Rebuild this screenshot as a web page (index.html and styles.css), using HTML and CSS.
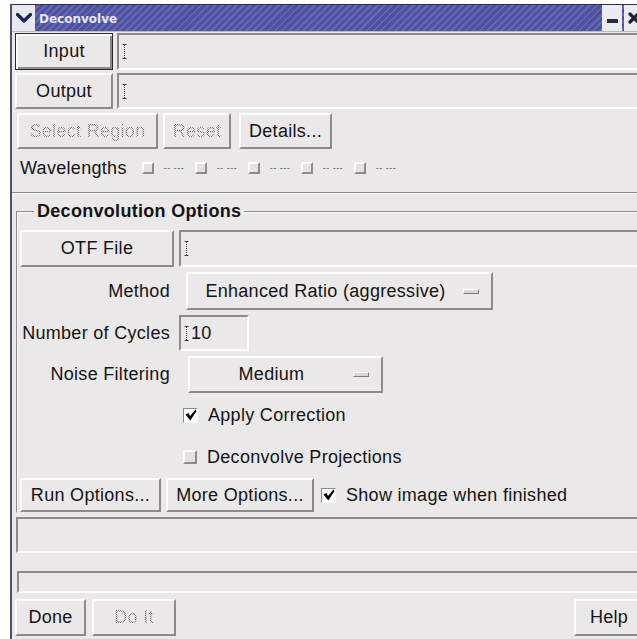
FILE: index.html
```html
<!DOCTYPE html>
<html>
<head>
<meta charset="utf-8">
<title>Deconvolve</title>
<link rel="stylesheet" href="styles.css">
</head>
<body>
<div class="window">
  <div class="titlebar">
    <span class="menu-btn">
      <svg width="16" height="12" viewBox="0 0 16 12"><path d="M1.5 2.5 L8 9 L14.5 2.5" fill="none" stroke="#1d2752" stroke-width="3.4" stroke-linecap="round" stroke-linejoin="round"/></svg>
    </span>
    <span class="title">Deconvolve</span>
    <span class="tb-btn"><span class="min-bar"></span></span>
    <span class="tb-btn">
      <svg width="12" height="12" viewBox="0 0 12 12"><path d="M2 2 L10 10 M10 2 L2 10" stroke="#1d2430" stroke-width="3.2" stroke-linecap="round"/></svg>
    </span>
  </div>

  <div class="content">
    <div class="row io-row">
      <div class="btn default io-btn">Input</div>
      <div class="field"><svg class="caret" width="5" height="15" viewBox="0 0 5 15"><path d="M0.5 0.5h4M0.5 14.5h4" stroke="#444"/><path d="M2.5 1v13" stroke="#444" stroke-dasharray="1 1"/></svg></div>
    </div>
    <div class="row io-row second">
      <div class="btn io-btn">Output</div>
      <div class="field"><svg class="caret" width="5" height="15" viewBox="0 0 5 15"><path d="M0.5 0.5h4M0.5 14.5h4" stroke="#444"/><path d="M2.5 1v13" stroke="#444" stroke-dasharray="1 1"/></svg></div>
    </div>
    <div class="row tool-row">
      <div class="btn disabled w-select"><span class="stipple">Select Region</span></div>
      <div class="btn disabled w-reset"><span class="stipple">Reset</span></div>
      <div class="btn w-details">Details...</div>
    </div>
    <div class="row wave-row">
      <span class="wave-label">Wavelengths</span>
      <span class="wave"><span class="check"></span><span class="dash">-- ---</span></span>
      <span class="wave"><span class="check"></span><span class="dash">-- ---</span></span>
      <span class="wave"><span class="check"></span><span class="dash">-- ---</span></span>
      <span class="wave"><span class="check"></span><span class="dash">-- ---</span></span>
      <span class="wave"><span class="check"></span><span class="dash">-- ---</span></span>
    </div>
    <div class="separator"></div>

    <fieldset class="group">
      <legend>Deconvolution Options</legend>
      <div class="row otf-row">
        <div class="btn w-otf">OTF File</div>
        <div class="field"><svg class="caret" width="5" height="15" viewBox="0 0 5 15"><path d="M0.5 0.5h4M0.5 14.5h4" stroke="#444"/><path d="M2.5 1v13" stroke="#444" stroke-dasharray="1 1"/></svg></div>
      </div>
      <div class="row method-row">
        <span class="label">Method</span>
        <div class="btn option w-method"><span class="opt-text">Enhanced Ratio (aggressive)</span><span class="indicator"></span></div>
      </div>
      <div class="row cycles-row">
        <span class="label">Number of Cycles</span>
        <div class="field small"><svg class="caret" width="5" height="15" viewBox="0 0 5 15"><path d="M0.5 0.5h4M0.5 14.5h4" stroke="#444"/><path d="M2.5 1v13" stroke="#444" stroke-dasharray="1 1"/></svg><span class="value">10</span></div>
      </div>
      <div class="row noise-row">
        <span class="label">Noise Filtering</span>
        <div class="btn option w-noise"><span class="opt-text">Medium</span><span class="indicator"></span></div>
      </div>
      <div class="row toggle-row apply">
        <span class="check on"><svg width="12" height="12" viewBox="0 0 12 12"><path d="M0.5 5.5 L3.5 4 L5 7 L10.5 0.5 L11.5 2 L5.3 11.5 Z" fill="#000"/></svg></span>
        <span class="toggle-text">Apply Correction</span>
      </div>
      <div class="row toggle-row project">
        <span class="check big"></span>
        <span class="toggle-text">Deconvolve Projections</span>
      </div>
      <div class="row run-row">
        <div class="btn w-run">Run Options...</div>
        <div class="btn w-more">More Options...</div>
        <span class="check on"><svg width="12" height="12" viewBox="0 0 12 12"><path d="M0.5 5.5 L3.5 4 L5 7 L10.5 0.5 L11.5 2 L5.3 11.5 Z" fill="#000"/></svg></span>
        <span class="toggle-text">Show image when finished</span>
      </div>
    </fieldset>

    <div class="status"></div>
    <div class="progress"></div>

    <div class="row action-row">
      <div class="btn w-done">Done</div>
      <div class="btn disabled w-doit"><span class="stipple">Do It</span></div>
      <div class="btn w-help">Help</div>
    </div>
  </div>
</div>
</body>
</html>
```

FILE: styles.css
```css
html, body {
  margin: 0;
  padding: 0;
  background: #ffffff;
}

body {
  width: 637px;
  height: 639px;
  overflow: hidden;
  font-family: "Liberation Sans", Arial, sans-serif;
  font-size: 18px;
  letter-spacing: 0.3px;
  color: #141414;
}

/* window frame */
.window {
  margin: 4px 0 0 10px;
  width: 632px;
  height: 660px;
  border-left: 2px solid #50506e;
  background: #ebe8e9;
}

.titlebar {
  display: flex;
  align-items: center;
  height: 28px;
  box-sizing: border-box;
  border-top: 1px solid #2c2f5e;
  border-bottom: 1px solid #b9b8c4;
  background: repeating-linear-gradient(135deg, #4e529e 0 3px, #6569b2 3px 5px);
  letter-spacing: 0;
}

.menu-btn {
  width: 23px;
  height: 100%;
  display: flex;
  align-items: center;
  justify-content: center;
  background: #e7e7ef;
}

.title {
  flex: 1;
  padding: 2px 0 0 4px;
  font-family: "DejaVu Sans", sans-serif;
  font-weight: bold;
  font-size: 12px;
  color: #e4e6ff;
}

.tb-btn {
  width: 20px;
  height: 100%;
  margin-left: 2px;
  display: flex;
  align-items: center;
  justify-content: center;
  background: #ecebf1;
}

.min-bar {
  width: 11px;
  height: 4px;
  margin-top: 6px;
  background: #232b45;
}

.content {
  padding-left: 3px;
}

.row {
  display: flex;
  align-items: center;
}

/* push buttons */
.btn {
  box-sizing: border-box;
  height: 100%;
  display: flex;
  align-items: center;
  justify-content: center;
  border: 2px solid;
  border-color: #fcfcfc #8c8a8b #8c8a8b #fcfcfc;
  background: #ebe8e9;
  white-space: nowrap;
}

.btn.default {
  border: 1px solid #2a2a2a;
  box-shadow: inset 2px 2px #fcfcfc, inset -2px -2px #8c8a8b;
}

/* insensitive labels are drawn through a 50% stipple */
.stipple {
  color: transparent;
  background: repeating-conic-gradient(#6e6c6d 0 25%, transparent 0 50%) 0 0 / 2px 2px;
  -webkit-background-clip: text;
  background-clip: text;
}

/* sunken text fields */
.field {
  box-sizing: border-box;
  flex: 1;
  height: 100%;
  display: flex;
  align-items: center;
  padding-left: 3px;
  border: 2px solid;
  border-color: #8c8a8b #fcfcfc #fcfcfc #8c8a8b;
}

.field.small {
  flex: none;
  width: 70px;
}

.value {
  margin-left: 2px;
}

.io-row {
  height: 37px;
  margin-top: 1px;
  gap: 4px;
}

.io-row.second {
  height: 36px;
  margin-top: 3px;
}

.io-btn {
  width: 98px;
}

.tool-row {
  height: 36px;
  margin-top: 4px;
  padding-left: 2px;
}

.w-select { width: 141px; }
.w-reset { width: 68px; margin-left: 5px; }
.w-details { width: 93px; margin-left: 8px; }

.wave-row {
  height: 34px;
  margin-top: 2px;
  padding-left: 5px;
}

.wave-label {
  margin-right: 15px;
}

.wave {
  display: flex;
  align-items: center;
  width: 53px;
}

.dash {
  margin-left: 10px;
  font-size: 9px;
  color: #555;
  letter-spacing: 0.5px;
}

/* toggle squares */
.check {
  box-sizing: border-box;
  flex: none;
  width: 12px;
  height: 12px;
  border: 2px solid;
  border-color: #fcfcfc #8c8a8b #8c8a8b #fcfcfc;
  background: #e4e1e2;
}

.check.big {
  width: 14px;
  height: 14px;
}

.check.on {
  width: 15px;
  height: 15px;
  border-width: 1px;
  border-color: #8c8a8b #fcfcfc #fcfcfc #8c8a8b;
  background: #ffffff;
  display: flex;
  align-items: center;
  justify-content: center;
}

.separator {
  margin-top: 7px;
  border-top: 1px solid #8c8a8b;
  border-bottom: 1px solid #fcfcfc;
  margin-left: -3px;
}

/* option group */
.group {
  margin: 7px 0 0 1px;
  padding: 8px 0 0 3px;
  min-width: 0;
  border: 1px solid;
  border-color: #8c8a8b transparent transparent #8c8a8b;
  box-shadow: inset 1px 1px #fcfcfc;
}

.group legend {
  margin-left: 14px;
  padding: 0 3px;
  font-weight: bold;
  background: #ebe8e9;
  line-height: 21px;
}

.otf-row {
  height: 37px;
  gap: 5px;
}

.w-otf { width: 154px; }

.label {
  width: 150px;
  text-align: right;
  white-space: nowrap;
}

.method-row {
  height: 38px;
  margin-top: 5px;
}

.option {
  justify-content: flex-start;
  padding-right: 12px;
}

.opt-text {
  flex: 1;
  text-align: center;
}

.indicator {
  box-sizing: border-box;
  width: 16px;
  height: 5px;
  border: 1px solid;
  border-color: #fcfcfc #7d7b7c #7d7b7c #fcfcfc;
  background: #d9d6d7;
}

.w-method {
  width: 307px;
  margin-left: 16px;
}

.cycles-row {
  height: 36px;
  margin-top: 5px;
}

.cycles-row .field {
  margin-left: 9px;
}

.noise-row {
  height: 37px;
  margin-top: 5px;
}

.w-noise {
  width: 195px;
  margin-left: 18px;
}

.toggle-row {
  height: 24px;
  padding-left: 163px;
}

.toggle-row.apply {
  margin-top: 10px;
}

.toggle-row.project {
  margin-top: 18px;
}

.toggle-text {
  margin-left: 10px;
}

.run-row {
  height: 34px;
  margin-top: 9px;
}

.w-run { width: 141px; }
.w-more { width: 148px; margin-left: 5px; margin-right: 7px; }

/* message and progress areas */
.status {
  margin: 4px 0 0 1px;
  height: 36px;
  box-sizing: border-box;
  border: 2px solid;
  border-color: #8c8a8b #fcfcfc #fcfcfc #8c8a8b;
}

.progress {
  margin: 18px 0 0 2px;
  height: 22px;
  box-sizing: border-box;
  border: 2px solid;
  border-color: #8c8a8b #fcfcfc #fcfcfc #8c8a8b;
}

.action-row {
  height: 37px;
  margin-top: 6px;
}

.w-done { width: 71px; }
.w-doit { width: 84px; margin-left: 6px; }
.w-help { width: 70px; margin-left: auto; }
```
